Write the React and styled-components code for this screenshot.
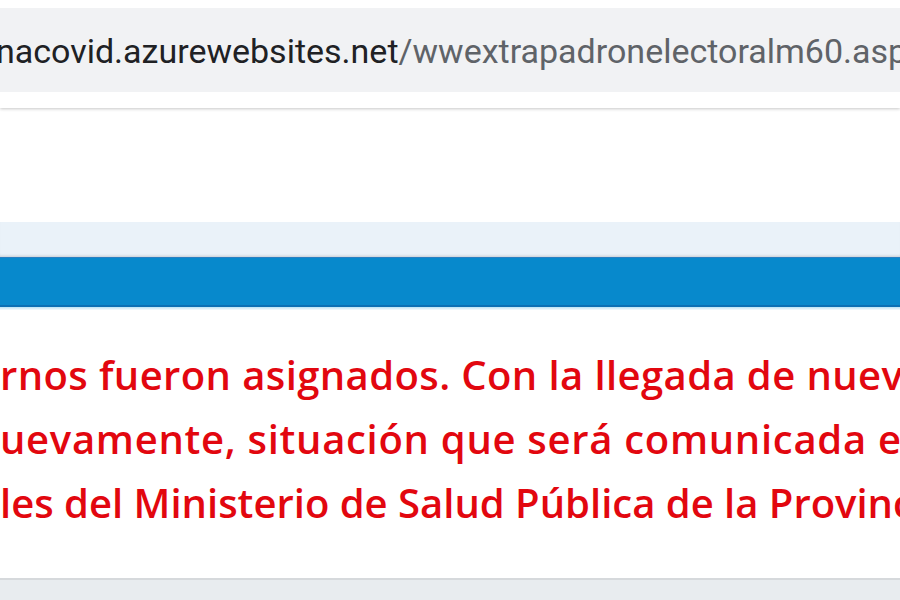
import React from "react";
import styled, { createGlobalStyle } from "styled-components";

const Global = createGlobalStyle`
  html, body { margin: 0; padding: 0; background: #ffffff; }
  body { width: 900px; height: 600px; overflow: hidden; }
`;

const Page = styled.div`
  width: 900px;
  height: 600px;
  display: flex;
  flex-direction: column;
  overflow: hidden;
  background: #ffffff;
`;

const Chrome = styled.header`
  padding-top: 8px;
  height: 100px;
  flex-shrink: 0;
  background: #ffffff;
  box-shadow: 0 1px 3px rgba(0, 0, 0, 0.22);
  position: relative;
  z-index: 2;
`;

const UrlBar = styled.div`
  height: 84px;
  background: #f1f2f4;
  display: flex;
  align-items: center;
  overflow: hidden;
  white-space: nowrap;
  font-family: Roboto, "Liberation Sans", sans-serif;
  font-size: 34px;
  padding-top: 2px;
  box-sizing: border-box;
`;

const UrlText = styled.span`
  margin-left: -4px;
`;

const Host = styled.span`
  color: #202124;
`;

const Path = styled.span`
  color: #5f6368;
`;

const Spacer = styled.div`
  height: 114px;
  flex-shrink: 0;
  background: #ffffff;
`;

const Band = styled.div`
  height: 35px;
  flex-shrink: 0;
  background: #eaf2f9;
  box-shadow: inset 0 -3px 3px -2px rgba(0, 0, 0, 0.16);
`;

const BlueBar = styled.div`
  height: 47px;
  flex-shrink: 0;
  background: #0789cc;
  border-top: 1px solid #2a80c2;
  border-bottom: 2px solid #0a70b4;
`;

const BlueEdge = styled.div`
  height: 3px;
  flex-shrink: 0;
  background: linear-gradient(#b9e3f4, #f4fbfd);
`;

const Card = styled.section`
  height: 270px;
  flex-shrink: 0;
  background: #ffffff;
  box-sizing: border-box;
  padding-top: 33px;
  overflow: hidden;
  border-bottom: 2px solid #d6d9dc;
`;

const Line = styled.div`
  white-space: nowrap;
  font-family: "Open Sans", "Liberation Sans", sans-serif;
  font-weight: 600;
  font-size: 40px;
  line-height: 64px;
  color: #e2070f;
  letter-spacing: ${(p) => p.$ls || 0}px;
  margin-left: ${(p) => p.$x || 0}px;
`;

const Footer = styled.div`
  flex: 1;
  background: #e8ecef;
`;

export default function App() {
  return (
    <Page>
      <Global />
      <Chrome>
        <UrlBar>
          <UrlText>
            <Host>nacovid.azurewebsites.net</Host>
            <Path>/wwextrapadronelectoralm60.aspx</Path>
          </UrlText>
        </UrlBar>
      </Chrome>
      <Spacer />
      <Band />
      <BlueBar />
      <BlueEdge />
      <Card>
        <Line $x={0} $ls={0.4}>rnos fueron asignados. Con la llegada de nuevas</Line>
        <Line $x={0} $ls={0.7}>uevamente, situación que será comunicada en</Line>
        <Line $x={0} $ls={0}>les del Ministerio de Salud Pública de la Provincia</Line>
      </Card>
      <Footer />
    </Page>
  );
}
